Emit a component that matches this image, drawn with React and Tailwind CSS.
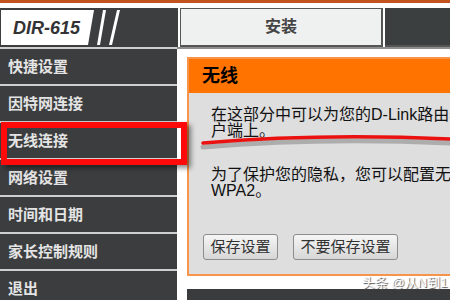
import React from 'react';

const menu = ['快捷设置', '因特网连接', '无线连接', '网络设置', '时间和日期', '家长控制规则', '退出'];

function Logo() {
  return (
    <div className="w-[178px] h-full bg-[#3c3e3f] flex items-stretch py-[2px]">
      <div className="w-[86px] bg-white flex items-center pl-[12px] ml-[1px]">
        <span className="font-['Liberation_Sans',sans-serif] font-bold italic text-[18px] text-[#333] leading-none">DIR-615</span>
      </div>
      <svg width="40" height="35" viewBox="0 0 40 35" className="shrink-0">
        <polygon points="0,0 7,0 1,35 0,35" fill="#fff" />
        <polygon points="16,0 19,0 13,35 10,35" fill="#fff" />
        <polygon points="30,0 33,0 25,35 22,35" fill="#fff" />
      </svg>
    </div>
  );
}

export default function App() {
  return (
    <div className="relative w-[450px] h-[300px] overflow-hidden bg-white font-['Liberation_Sans','Noto_Sans_CJK_SC',sans-serif]">
      {/* top stripe */}
      <div className="h-[3px] bg-[#c4541f]" />
      <div className="h-[5px] bg-white" />

      {/* header */}
      <div className="h-[39px] flex">
        <Logo />
        <div className="w-[2px]" />
        <div className="w-[203px] bg-[#eff0f0] border border-[#555] border-b-2 border-r-2 flex items-center justify-center">
          <span className="font-bold text-[16px] text-[#444]">安装</span>
        </div>
        <div className="w-[2px]" />
        <div className="flex-1 bg-[#3c3f40] border-b-2 border-[#555]" />
      </div>

      {/* body */}
      <div className="flex">
        <div className="w-[177px] shrink-0 bg-[#3b3d3e]">
          {menu.map((item) => (
            <div key={item} className="h-[37px] border-t-2 border-[#cfcfcf] flex items-center pl-[8px]">
              <span className="text-[15px] font-semibold text-[#e4e4e4] leading-none">{item}</span>
            </div>
          ))}
        </div>

        <div className="flex-1 overflow-hidden border-t-2 border-[#8e8e8e]">
          <div className="ml-[10px] mt-[8px] w-[340px] border-2 border-[#f7934a] bg-[#dedede]">
            <div className="h-[34px] bg-[#ff7300] flex items-center pl-[13px]">
              <span className="font-bold text-[18px] text-black">无线</span>
            </div>
            <div className="pt-[14px] pb-[14px] pl-[14px] text-[16px] leading-[16px] text-[#111] whitespace-nowrap">
              <p className="pl-[8px]">在这部分中可以为您的D-Link路由器配置无线设置，以便连接无线客</p>
              <p className="pl-[8px]">户端上。</p>
              <p className="pl-[8px] mt-[28px]">为了保护您的隐私，您可以配置无线安全功能，支持WEP、WPA和</p>
              <p className="pl-[8px]">WPA2。</p>
              <div className="flex gap-[15px] mt-[35px]">
                <button className="h-[26px] w-[75px] border border-[#8c8c8c] rounded-[3px] bg-gradient-to-b from-[#f6f6f6] to-[#d6d6d6] text-[15px] text-[#333]">保存设置</button>
                <button className="h-[26px] w-[105px] border border-[#8c8c8c] rounded-[3px] bg-gradient-to-b from-[#f6f6f6] to-[#d6d6d6] text-[15px] text-[#333]">不要保存设置</button>
              </div>
            </div>
          </div>
          <div className="ml-[10px] mt-[13px] w-[340px] h-[20px] bg-[#3a3b3c]" />
        </div>
      </div>

      {/* red highlight around 无线连接 */}
      <div className="absolute left-[1px] top-[122px] w-[186px] h-[43px] border-[6px] border-[#ff0a0a] shadow-[4px_3px_5px_rgba(0,0,0,0.45)]" />

      {/* hand-drawn red underline */}
      <svg className="absolute left-[200px] top-[128px]" width="250" height="30" viewBox="0 0 250 30">
        <path d="M3 19 Q120 9 250 15" stroke="rgba(0,0,0,0.22)" strokeWidth="5" fill="none" strokeLinecap="round" />
        <path d="M3 15 Q120 5 250 11" stroke="#ec1111" strokeWidth="3.5" fill="none" strokeLinecap="round" />
      </svg>

      {/* watermark */}
      <div className="absolute left-[362px] top-[275px] whitespace-nowrap text-[13px] text-white leading-[16px] [text-shadow:1px_1px_1px_#555]">
        头条 @从N到1
      </div>
    </div>
  );
}
